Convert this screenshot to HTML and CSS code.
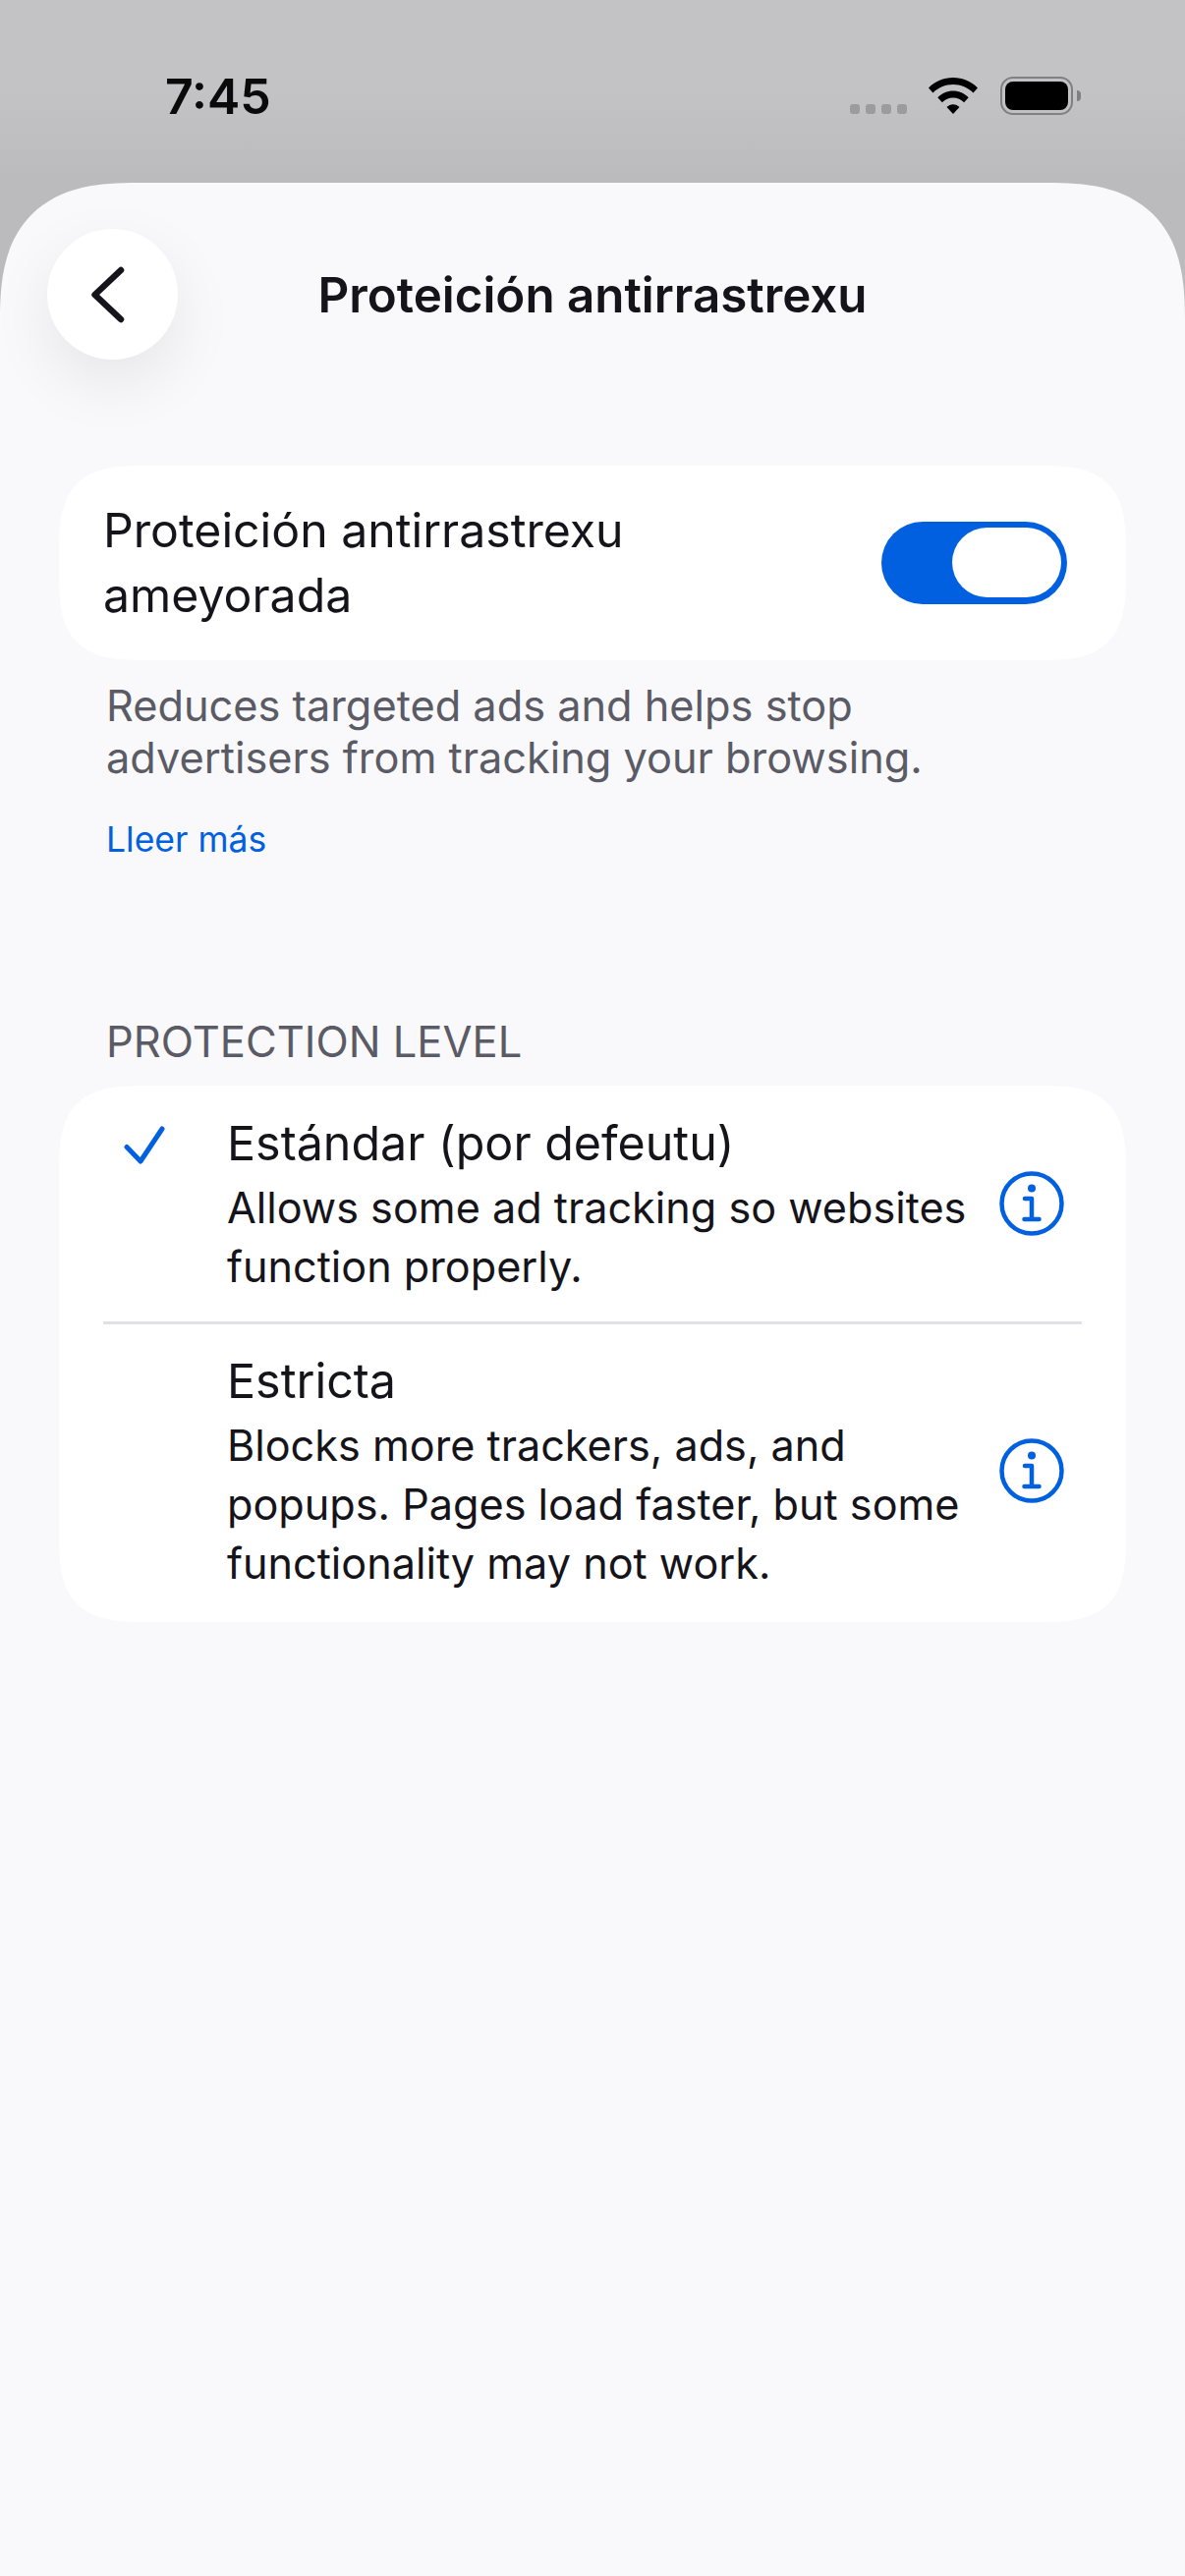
FILE: index.html
```html
<!DOCTYPE html>
<html lang="es">
<head>
    <meta charset="UTF-8">
    <meta name="viewport" content="width=device-width, initial-scale=1.0">
    <title>Proteición antirrastrexu</title>
    <link rel="stylesheet" href="styles.css">
</head>
<body>
<div class="status-bar">
    <div class="status-time">7:45</div>
    <div class="status-icons">
        <div class="signal-dots"><span></span><span></span><span></span><span></span></div>
        <svg class="wifi-icon" width="50" height="37" viewBox="0 0 50 37">
            <path d="M0 10.5C6.5 3.8 15.4 0 25 0s18.500 3.800 25 10.500l-4.500 5C40.200 10.200 32.900 7 25 7S9.800 10.200 4.500 15.500z"/>
            <path d="M9.300 20.200C13.400 16 19 13.500 25 13.500s11.600 2.500 15.700 6.700l-4.600 5C33.200 22.200 29.300 20.500 25 20.500s-8.200 1.700-11.100 4.700z"/>
            <path d="M18.500 30c1.700-1.700 4-2.800 6.500-2.800s4.800 1.100 6.500 2.800L25 37z"/>
        </svg>
        <div class="battery">
            <div class="battery-body"><div class="battery-level"></div></div>
            <div class="battery-nub"></div>
        </div>
    </div>
</div>

<div class="sheet">
    <div class="sheet-header">
        <button class="back-button">
            <svg width="34" height="58" viewBox="0 0 34 58" fill="none">
                <path d="M30 4 3.500 29 30 54" stroke="#15141a" stroke-width="6.500" stroke-linecap="round" stroke-linejoin="round"/>
            </svg>
        </button>
        <h1 class="sheet-title">Proteición antirrastrexu</h1>
        <div></div>
    </div>

    <div class="card toggle-card">
        <div class="toggle-label">Proteición antirrastrexu ameyorada</div>
        <div class="toggle"><div class="toggle-thumb"></div></div>
    </div>
    <div class="card-note">
        <p class="note-text">Reduces targeted ads and helps stop advertisers from tracking your browsing.</p>
        <a class="note-link" href="#">Lleer más</a>
    </div>

    <div class="section-label">PROTECTION LEVEL</div>
    <div class="card">
        <div class="option option-first">
            <div class="option-check">
                <svg width="42" height="42" viewBox="0 0 42 42" fill="none">
                    <path d="M3 21.500 17 36 39 3" stroke="#0060df" stroke-width="5" stroke-linecap="round" stroke-linejoin="round"/>
                </svg>
            </div>
            <div class="option-text">
                <div class="option-title">Estándar (por defeutu)</div>
                <div class="option-desc">Allows some ad tracking so websites function properly.</div>
            </div>
            <svg class="info-icon" width="66" height="66" viewBox="0 0 66 66" fill="none">
                <circle cx="33" cy="33" r="30.500" stroke="#0060df" stroke-width="4.500"/>
                <circle cx="33" cy="17.500" r="4" fill="#0060df"/>
                <path d="M26 28h7v21M25.500 49h15" stroke="#0060df" stroke-width="4.500" stroke-linecap="round" stroke-linejoin="round"/>
            </svg>
        </div>
        <div class="option">
            <div class="option-check"></div>
            <div class="option-text">
                <div class="option-title">Estricta</div>
                <div class="option-desc">Blocks more trackers, ads, and popups. Pages load faster, but some functionality may not work.</div>
            </div>
            <svg class="info-icon" width="66" height="66" viewBox="0 0 66 66" fill="none">
                <circle cx="33" cy="33" r="30.500" stroke="#0060df" stroke-width="4.500"/>
                <circle cx="33" cy="17.500" r="4" fill="#0060df"/>
                <path d="M26 28h7v21M25.500 49h15" stroke="#0060df" stroke-width="4.500" stroke-linecap="round" stroke-linejoin="round"/>
            </svg>
        </div>
    </div>
</div>
</body>
</html>
```

FILE: styles.css
```css
body {
    font-family: Inter, "Liberation Sans", sans-serif;
    margin: 0;
    height: 2622px;
    overflow: hidden;
    display: flex;
    flex-direction: column;
    color: #15141a;
    background: linear-gradient(#c3c3c5 90px, #bbbbbd 186px);
}

.status-bar {
    height: 186px;
    flex-shrink: 0;
    display: flex;
    justify-content: space-between;
    align-items: flex-start;
    padding: 0 106px 0 168px;
    box-sizing: border-box;
}

.status-time {
    font-size: 50px;
    font-weight: 600;
    line-height: 60px;
    margin-top: 68px;
    color: #0a0a0a;
}

.status-icons {
    display: flex;
    align-items: flex-start;
    margin-top: 78px;
}

.signal-dots {
    display: flex;
    gap: 6px;
    margin-top: 28px;
    margin-right: 22px;
}

.signal-dots span {
    width: 10px;
    height: 10px;
    border-radius: 3px;
    background: #9c9c9e;
}

.wifi-icon {
    margin-top: 1px;
    margin-right: 23px;
}

.battery {
    display: flex;
    align-items: center;
}

.battery-body {
    width: 74px;
    height: 39px;
    box-sizing: border-box;
    border: 2.500px solid #808082;
    border-radius: 13px;
    padding: 3px;
}

.battery-level {
    height: 100%;
    background: #000;
    border-radius: 8px;
}

.battery-nub {
    width: 4px;
    height: 11px;
    margin-left: 4px;
    background: #808082;
    border-radius: 0 4px 4px 0;
}

.sheet {
    flex: 1;
    background: #f9f9fb;
    border-radius: 140px 140px 0 0;
    corner-shape: superellipse(1.4);
    padding-top: 47px;
}

.sheet-header {
    display: grid;
    grid-template-columns: 1fr auto 1fr;
    align-items: center;
    padding-left: 48px;
    margin-bottom: 108px;
}

.back-button {
    width: 133px;
    height: 133px;
    border: none;
    border-radius: 50%;
    padding: 0 10px 0 0;
    background: #fff;
    box-shadow: 0 24px 64px rgba(0, 0, 0, 0.08);
    display: flex;
    align-items: center;
    justify-content: center;
}

.sheet-title {
    font-size: 49.300px;
    font-weight: 600;
    line-height: 60px;
    margin: 0;
    margin-left: -48px;
}

.card {
    background: #fff;
    margin: 0 60px;
    padding: 0 45px;
    border-radius: 90px;
    corner-shape: superellipse(1.6);
}

.toggle-card {
    height: 198px;
    box-sizing: border-box;
    display: flex;
    align-items: center;
    justify-content: space-between;
    padding-right: 60px;
}

.toggle-label {
    font-size: 48.200px;
    line-height: 66px;
    width: 600px;
}

.toggle {
    width: 189px;
    height: 84px;
    box-sizing: border-box;
    padding: 6px;
    border-radius: 42px;
    background: #0060df;
    display: flex;
    justify-content: flex-end;
}

.toggle-thumb {
    width: 111px;
    height: 71px;
    border-radius: 36px;
    background: #fff;
}

.card-note {
    margin: 20px 108px 0;
}

.note-text {
    font-size: 43.300px;
    line-height: 53px;
    color: #5b5b66;
    margin: 0;
}

.note-link {
    display: block;
    font-size: 35.500px;
    line-height: 48px;
    margin-top: 33px;
    color: #0060df;
    text-decoration: none;
}

.section-label {
    font-size: 43.500px;
    line-height: 52px;
    color: #5b5b66;
    margin: 155px 108px 19px;
}

.option {
    display: flex;
    align-items: center;
    padding: 24px 18px 30px 0;
}

.option-first {
    padding: 25px 18px 26px 0;
    border-bottom: 3px solid #e0e0e6;
}

.option-check {
    width: 126px;
    flex-shrink: 0;
    align-self: flex-start;
    padding: 16px 0 0 21px;
    box-sizing: border-box;
}

.option-text {
    flex: 1;
    padding-right: 20px;
}

.option-title {
    font-size: 48.400px;
    line-height: 67px;
    margin-bottom: 2px;
}

.option-desc {
    font-size: 43.200px;
    line-height: 60px;
}

.info-icon {
    flex-shrink: 0;
}
```
